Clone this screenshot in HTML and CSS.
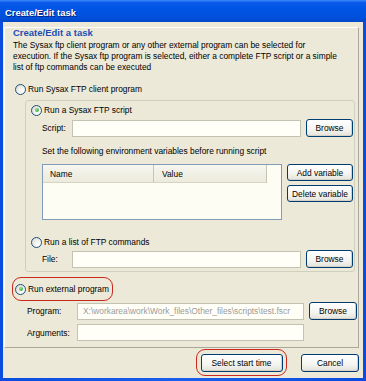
FILE: index.html
```html
<!DOCTYPE html>
<html>
<head>
<meta charset="utf-8">
<link rel="stylesheet" href="styles.css">
</head>
<body>
<div class="window">
  <div class="titlebar"><span class="title">Create/Edit task</span></div>
  <div class="client">
    <div class="panel">
      <div class="heading">Create/Edit a task</div>
      <div class="desc">The Sysax ftp client program or any other external program can be selected for<br>execution. If the Sysax ftp program is selected, either a complete FTP script or a simple<br>list of ftp commands can be executed</div>

      <div class="radio-row r1"><span class="radio"></span><span>Run Sysax FTP client program</span></div>

      <div class="group">
        <div class="radio-row r2"><span class="radio checked"></span><span>Run a Sysax FTP script</span></div>
        <div class="field-row script-row">
          <span class="label lbl-sub">Script:</span>
          <span class="input w-sub"></span>
          <span class="btn b-browse">Browse</span>
        </div>
        <div class="note">Set the following environment variables before running script</div>
        <div class="table-row">
          <div class="table">
            <div class="thead">
              <div class="th th-name">Name</div>
              <div class="th th-value">Value</div>
            </div>
          </div>
          <div class="side-btns">
            <span class="btn b-var">Add variable</span>
            <span class="btn b-var">Delete variable</span>
          </div>
        </div>
        <div class="radio-row r3"><span class="radio"></span><span>Run a list of FTP commands</span></div>
        <div class="field-row file-row">
          <span class="label lbl-sub">File:</span>
          <span class="input w-sub"></span>
          <span class="btn b-browse">Browse</span>
        </div>
      </div>

      <div class="highlight ext">
        <div class="radio-row"><span class="radio checked"></span><span>Run external program</span></div>
      </div>
      <div class="field-row prog-row">
        <span class="label lbl-main">Program:</span>
        <span class="input w-main gray">X:\workarea\work\Work_files\Other_files\scripts\test.fscr</span>
        <span class="btn b-browse2">Browse</span>
      </div>
      <div class="field-row args-row">
        <span class="label lbl-main">Arguments:</span>
        <span class="input w-main"></span>
      </div>
    </div>
    <div class="footer">
      <div class="highlight start"><span class="btn b-start">Select start time</span></div>
      <span class="btn b-cancel">Cancel</span>
    </div>
  </div>
</div>
</body>
</html>
```

FILE: styles.css
```css
html, body {
  margin: 0;
  padding: 0;
  background: #0842d6;
}
.window {
  width: 366px;
  height: 381px;
  display: flex;
  flex-direction: column;
  background: linear-gradient(to right, #0a4be0, #1a5ff0 50%, #0a4be0);
  font-family: "Liberation Sans", Arial, sans-serif;
  font-size: 8.4px;
  color: #000;
}
.titlebar {
  height: 22px;
  flex: none;
  background: linear-gradient(to bottom, #3d8bff 0%, #0a5ae8 12%, #0054e3 45%, #0050dc 80%, #0046c8 100%);
  display: flex;
  align-items: center;
  padding-left: 5px;
  padding-top: 2px;
  box-sizing: border-box;
}
.title {
  color: #fff;
  font-weight: bold;
  font-size: 9.4px;
  text-shadow: 1px 1px 0 #0a1f7a;
}
.client {
  flex: 1;
  margin: 0 3px 3px 3px;
  background: #ece9d8;
  display: flex;
  flex-direction: column;
}
.panel {
  margin: 5px 4px 0 1px;
  height: 321px;
  box-sizing: border-box;
  border-top: 1px solid #fff;
  border-left: 1px solid #fff;
  border-right: 1px solid #aca899;
  border-bottom: 1px solid #aca899;
  display: flex;
  flex-direction: column;
}
.heading {
  height: 10px;
  line-height: 10px;
  padding-left: 8px;
  font-weight: bold;
  font-size: 9.5px;
  color: #1c4fb4;
}
.desc {
  margin-top: 2px;
  padding-left: 8px;
  white-space: nowrap;
  line-height: 11px;
}
.radio-row {
  display: flex;
  align-items: center;
  gap: 2px;
  height: 14px;
}
.radio {
  width: 11px;
  height: 11px;
  border: 1px solid #1c5180;
  border-radius: 50%;
  box-sizing: border-box;
  background: radial-gradient(circle at 70% 70%, #ffffff 0%, #f2f2ee 40%, #d5d3c8 100%);
  position: relative;
  flex: none;
}
.radio.checked::after {
  content: "";
  position: absolute;
  left: 2.5px;
  top: 2.5px;
  width: 4px;
  height: 4px;
  border-radius: 50%;
  background: radial-gradient(circle at 35% 35%, #8ee08e, #21a121);
}
.r1 {
  margin-top: 9px;
  padding-left: 10px;
}
.group {
  margin: 4px 3px 0 20px;
  height: 172px;
  box-sizing: border-box;
  border: 1px solid #d0d0bf;
  border-radius: 3px;
  padding: 2px 0 0 5px;
  display: flex;
  flex-direction: column;
}
.field-row {
  display: flex;
  align-items: center;
}
.label { flex: none; }
.lbl-sub { width: 30px; padding-left: 11px; }
.lbl-main { width: 50px; padding-left: 22px; }
.input {
  height: 17px;
  box-sizing: border-box;
  border: 1px solid #c3c3b4;
  background: #fffff8;
  flex: none;
  display: flex;
  align-items: center;
  padding-left: 5px;
  overflow: hidden;
  white-space: nowrap;
}
.w-sub { width: 229px; }
.w-main { width: 227px; }
.gray { color: #9a9a9a; }
.btn {
  display: flex;
  align-items: center;
  justify-content: center;
  box-sizing: border-box;
  height: 18px;
  border: 1px solid #003c74;
  border-radius: 3px;
  background: linear-gradient(to bottom, #ffffff 0%, #f4f4f0 60%, #e3e2da 100%);
  box-shadow: inset -1px -1px 0 #d6d0c5;
  flex: none;
  white-space: nowrap;
}
.b-browse { width: 47px; margin-left: 5px; }
.b-browse2 { width: 48px; margin-left: 5px; height: 18px; }
.script-row { margin-top: 2px; }
.note {
  margin-top: 8px;
  padding-left: 11px;
  height: 12px;
  line-height: 12px;
}
.table-row {
  display: flex;
  margin-top: 7px;
  padding-left: 11px;
}
.table {
  width: 240px;
  height: 56px;
  box-sizing: border-box;
  border: 1px solid #7f9db9;
  background: #fdfdf3;
  flex: none;
}
.thead {
  display: flex;
  height: 17px;
  background: linear-gradient(to bottom, #f7f6f0, #ebeadb);
  border-bottom: 1px solid #d6d3c4;
  width: 223px;
  border-right: 1px solid #c7c5b2;
}
.th {
  display: flex;
  align-items: center;
  box-sizing: border-box;
  height: 17px;
}
.th-name {
  width: 111px;
  padding-left: 7px;
  border-right: 1px solid #c7c5b2;
}
.th-value {
  padding-left: 8px;
}
.side-btns {
  display: flex;
  flex-direction: column;
  gap: 4px;
  margin-left: 5px;
}
.b-var { width: 66px; height: 17px; }
.r3 { margin-top: 15px; }
.file-row { margin-top: 1px; }
.highlight {
  border: 1px solid #c8281e;
  border-radius: 9px;
  box-sizing: border-box;
  flex: none;
}
.ext {
  margin: 5px 0 0 7px;
  width: 101px;
  height: 24px;
  display: flex;
  align-items: center;
  padding-left: 2px;
}
.prog-row { margin-top: 1px; }
.args-row { margin-top: 4px; }
.footer {
  flex: 1;
  display: flex;
  align-items: center;
  justify-content: flex-end;
  padding-right: 4px;
  gap: 14px;
  padding-bottom: 1px;
}
.start {
  width: 91px;
  height: 27px;
  display: flex;
  align-items: center;
  justify-content: center;
}
.b-start { width: 82px; height: 18px; }
.b-cancel { width: 58px; height: 18px; }
```
